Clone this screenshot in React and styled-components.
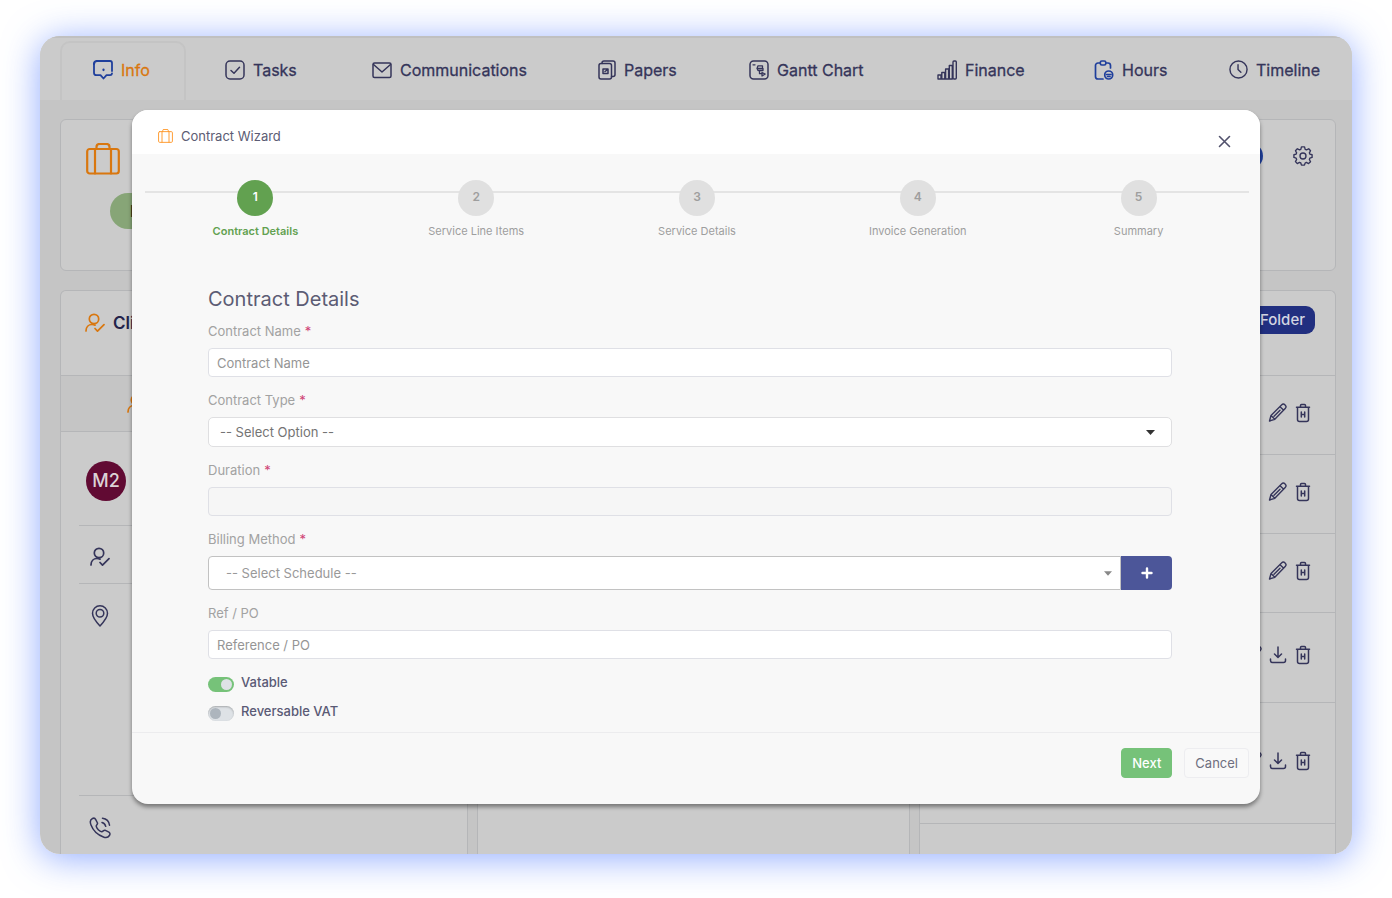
import React from "react";
import styled, { createGlobalStyle, css } from "styled-components";

const ink = "#35355a";
const orange = "#d9770f";
const blue = "#1f3f9c";
const line = "#b5b6b8";

const GlobalStyle = createGlobalStyle`
  *, *::before, *::after { box-sizing: border-box; }
  body { margin: 0; background: #fff; font-family: Inter, "Liberation Sans", sans-serif; font-size: 13px; line-height: 16px; color: ${ink}; }
  button, input, select { font: inherit; margin: 0; }
  h1, h2, h3, p { margin: 0; font-weight: 400; }
  svg { display: block; flex: none; }
`;

const Page = styled.div`
  padding: 36px 40px 44px;
`;

const Frame = styled.div`
  position: relative;
  overflow: hidden;
  border-radius: 20px;
  background: #c5c5c5;
`;

const Glow = styled.div`
  border-radius: 20px;
  box-shadow: 0 4px 36px rgba(70, 115, 255, 0.6);
`;

/* ---------- top navigation ---------- */

const Nav = styled.nav`
  display: grid;
  grid-template-columns: 129fr 147fr 226fr 151fr 188fr 157fr 135fr 143fr;
  align-items: end;
  height: 64px;
  padding: 0 16px 0 20px;
  background: #cbcbcb;
  border-top: 2px solid #c0c0c0;
`;

const Tab = styled.a`
  display: flex;
  align-items: center;
  gap: 8px;
  height: 59px;
  margin-right: 3px;
  padding: 0 0 2px 36px;
  font-size: 16px;
  line-height: 20px;
  white-space: nowrap;
  text-decoration: none;
  color: ${ink};
  -webkit-text-stroke: 0.3px currentColor;
  ${(p) =>
    p.$active &&
    css`
      padding: 0 0 4px 31px;
      color: ${orange};
      border: 2px solid #c4c4c4;
      border-bottom: 0;
      border-radius: 10px 10px 0 0;
    `}
`;

/* ---------- dimmed workspace ---------- */

const Workspace = styled.main`
  display: flex;
  flex-direction: column;
  gap: 19px;
  padding: 19px 16px 0 20px;
`;

const SummaryCard = styled.section`
  display: flex;
  justify-content: space-between;
  align-items: flex-start;
  height: 152px;
  padding: 23px 22px 0 25px;
  background: #cbcbcb;
  border: 1px solid ${line};
  border-radius: 6px;
`;

const SummaryMain = styled.div`
  display: flex;
  flex-direction: column;
  gap: 18px;
`;

const StatusPill = styled.span`
  margin-left: 24px;
  width: 110px;
  padding: 8px 20px;
  border-radius: 18px;
  background: #87a577;
  color: #17301a;
  font-size: 16px;
  line-height: 20px;
  font-weight: 600;
`;

const SummaryActions = styled.div`
  display: flex;
  align-items: center;
  gap: 30px;
`;

const RoundButton = styled.button`
  width: 26px;
  height: 26px;
  padding: 0;
  border: 0;
  border-radius: 13px;
  background: ${blue};
`;

const IconButton = styled.button`
  display: flex;
  padding: 0;
  border: 0;
  background: none;
  color: ${(p) => p.$color || ink};
`;

const IconSlot = styled.span`
  display: flex;
  justify-content: center;
  width: 28px;
`;

const Columns = styled.div`
  display: grid;
  grid-template-columns: 408fr 434fr 417fr;
  gap: 9px;
`;

const Panel = styled.section`
  background: #cbcbcb;
  border: 1px solid ${line};
  border-bottom: 0;
  border-radius: 6px 6px 0 0;
`;

const PanelHead = styled.header`
  display: flex;
  align-items: flex-start;
  gap: 8px;
  height: 85px;
  padding: 22px 24px 0;
  border-bottom: 1px solid ${line};
  ${(p) =>
    p.$end &&
    css`
      justify-content: flex-end;
      padding: 15px 20px 0;
    `}
`;

const PanelTitle = styled.h2`
  font-size: 17px;
  line-height: 20px;
  font-weight: 600;
  color: #23234a;
`;

const SubHead = styled.div`
  display: flex;
  align-items: center;
  height: 56px;
  padding-left: 66px;
  background: #c5c5c5;
  border-bottom: 1px solid ${line};
  color: ${orange};
`;

const ClientRows = styled.div`
  padding: 0 18px;
`;

const ClientRow = styled.div`
  display: flex;
  align-items: ${(p) => (p.$top ? "flex-start" : "center")};
  height: ${(p) => p.$height}px;
  padding: ${(p) => (p.$top ? "21px" : "4px")} 7px 0;
  border-bottom: 1px solid ${line};
  &:last-child { border-bottom: 0; }
`;

const Avatar = styled.span`
  width: 40px;
  height: 40px;
  border-radius: 50%;
  background: #610a33;
  color: #dcd2d6;
  font-size: 18px;
  line-height: 40px;
  font-weight: 500;
  text-align: center;
`;

const FolderButton = styled.button`
  height: 28px;
  padding: 0 10px 0 20px;
  border: 0;
  border-radius: 9px;
  background: #212f80;
  color: #d3d5e2;
  font-size: 15px;
  font-weight: 500;
`;

const FileRow = styled.div`
  display: flex;
  justify-content: flex-end;
  align-items: center;
  gap: 5px;
  height: ${(p) => p.$height}px;
  padding: 0 22px 5px 0;
  border-bottom: 1px solid ${line};
`;

/* ---------- wizard dialog ---------- */

const Dialog = styled.div`
  position: absolute;
  top: 74px;
  left: 92px;
  right: 92px;
  border-radius: 16px;
  background: #f8f8f8;
  box-shadow: 0 3px 4px rgba(0, 0, 0, 0.42);
`;

const DialogHead = styled.header`
  display: flex;
  align-items: center;
  gap: 8px;
  height: 44px;
  padding: 8px 29px 0 26px;
  border-radius: 16px 16px 0 0;
  background: #fff;
  color: #ff9a2e;
`;

const DialogTitle = styled.h1`
  flex: 1;
  font-size: 13px;
  color: #5c5c74;
`;

const CloseButton = styled(IconButton)`
  padding-top: 10px;
  color: #51516c;
`;

const Steps = styled.ol`
  position: relative;
  display: grid;
  grid-template-columns: repeat(5, 1fr);
  margin: 0 11px 0 13px;
  padding: 26px 0 0;
  list-style: none;
  &::before {
    content: "";
    position: absolute;
    top: 37px;
    left: 0;
    right: 0;
    height: 2px;
    background: #e4e4e4;
  }
`;

const Step = styled.li`
  position: relative;
  display: flex;
  flex-direction: column;
  align-items: center;
  gap: 7px;
  font-size: 11px;
  color: ${(p) => (p.$active ? "#62a150" : "#9e9e9e")};
  font-weight: ${(p) => (p.$active ? 600 : 400)};
`;

const StepDot = styled.span`
  width: 36px;
  height: 36px;
  border-radius: 50%;
  background: ${(p) => (p.$active ? "#62a150" : "#e0e0e0")};
  color: ${(p) => (p.$active ? "#fff" : "#9e9e9e")};
  font-size: 12px;
  line-height: 34px;
  font-weight: 600;
  text-align: center;
`;

const Form = styled.form`
  padding: 48px 88px 0 76px;
`;

const FormTitle = styled.h2`
  margin-bottom: 12px;
  font-size: 20px;
  line-height: 24px;
  color: #5c5c74;
`;

const Field = styled.div`
  display: flex;
  flex-direction: column;
  gap: 9px;
  margin-bottom: 15px;
`;

const Label = styled.label`
  color: #a2a2a2;
`;

const Required = styled.span`
  margin-left: 4px;
  color: #cf4274;
`;

const TextInput = styled.input`
  width: 100%;
  height: 29px;
  padding: 0 8px;
  border: 1px solid #dfe0e6;
  border-radius: 4px;
  background: #fff;
  color: #555;
  outline: none;
  &::placeholder { color: #959595; opacity: 1; }
  &:read-only { background: #f6f6f6; }
`;

const SelectBox = styled.div`
  position: relative;
  flex: 1;
  svg {
    position: absolute;
    top: 50%;
    right: ${(p) => (p.$joined ? 9 : 17)}px;
    margin-top: -2px;
    pointer-events: none;
    color: ${(p) => (p.$joined ? "#888" : "#333")};
  }
`;

const Select = styled.select`
  display: block;
  appearance: none;
  width: 100%;
  height: 30px;
  padding: 0 30px 0 11px;
  border: 1px solid #dfdfe1;
  border-radius: 5px;
  background: #fff;
  color: #747474;
  outline: none;
  ${(p) =>
    p.$joined &&
    css`
      height: 34px;
      padding-left: 17px;
      border-color: #c2c2c2;
      border-radius: 4px 0 0 4px;
      color: #999;
    `}
`;

const InputGroup = styled.div`
  display: flex;
`;

const AddButton = styled.button`
  display: flex;
  align-items: center;
  justify-content: center;
  width: 51px;
  height: 34px;
  padding: 0;
  border: 0;
  border-radius: 0 4px 4px 0;
  background: #4c5699;
  color: #fff;
`;

const SwitchRow = styled.label`
  display: flex;
  align-items: flex-start;
  gap: 7px;
  height: 29px;
  color: #5a5a75;
  font-weight: 500;
`;

const Switch = styled.input`
  appearance: none;
  width: 26px;
  height: 15px;
  margin-top: 3px;
  padding: 2px;
  border-radius: 8px;
  background: #dee2e6;
  box-shadow: inset 0 1px 2px rgba(0, 0, 0, 0.25);
  &::after {
    content: "";
    display: block;
    width: 11px;
    height: 11px;
    border-radius: 50%;
    background: #adb5bd;
  }
  &:checked { background: #76c279; box-shadow: none; }
  &:checked::after { margin-left: 11px; background: #dee2e6; }
`;

const DialogFoot = styled.footer`
  display: flex;
  justify-content: flex-end;
  gap: 12px;
  padding: 15px 11px 26px;
  border-top: 1px solid #ececee;
`;

const FootButton = styled.button`
  height: 30px;
  padding: 0 10px;
  border: 1px solid ${(p) => (p.$primary ? "#76c279" : "#ededf0")};
  border-radius: 4px;
  background: ${(p) => (p.$primary ? "#76c279" : "#f9f9f9")};
  color: ${(p) => (p.$primary ? "#fff" : "#6e6e7e")};
  font-weight: ${(p) => (p.$primary ? 500 : 400)};
`;

/* ---------- icons ---------- */

const Icon = ({ size = 20, height, box = "0 0 20 20", stroke = 1.5, color = "currentColor", children }) => (
  <svg width={size} height={height || size} viewBox={box} fill="none" stroke={color} strokeWidth={stroke} strokeLinecap="round" strokeLinejoin="round" aria-hidden="true">
    {children}
  </svg>
);

const InfoIcon = () => (
  <Icon color={blue} stroke={1.8}>
    <path d="M4 1h13a2 2 0 0 1 2 2v8M19 13.500a2 2 0 0 1-2 1.700h-3.500L10.500 18.500l-3-3.300H3.500a2.500 2.500 0 0 1-2.500-2.500V4" />
    <path d="M1 4a3 3 0 0 1 3-3M10.500 9.500v.6" strokeWidth="2.200" />
  </Icon>
);
const TasksIcon = () => (
  <Icon><rect x="1" y="1" width="18" height="18" rx="4" /><path d="m6 10.500 3 2.800 5.500-6" /></Icon>
);
const MailIcon = () => (
  <Icon><rect x="1" y="3" width="18" height="14.500" rx="1.500" /><path d="m1.500 4.500 8.500 7.500 8.500-7.500" /></Icon>
);
const PapersIcon = () => (
  <Icon size={18} height={20} box="0 0 18 20"><rect x="1" y="3.500" width="12.500" height="15.500" rx="2" /><path d="M4 3.500V3a2 2 0 0 1 2-2h9a2 2 0 0 1 2 2v11.500a2 2 0 0 1-2 2h-1.500" /><path d="M5 9h5v4.500H5zM7 11.500l2-1.500" /></Icon>
);
const GanttIcon = () => (
  <Icon><rect x="1" y="1" width="18" height="18" rx="3.500" /><path d="M4 4.800h2M9 5.800h4.500v2.700H8zM8 8.500l1 2h5v-2M10.500 10.500v3.200h2.500M13 12.500l3.200 1.500-3.200 2z" strokeWidth="1.300" /></Icon>
);
const FinanceIcon = () => (
  <Icon stroke={1.4}><path d="M1 15h3v4H1zM4.800 12.500h3V19h-3zM8.600 9h3v10h-3zM12.300 5.500h3V19h-3z" /><rect x="16" y="1" width="3.300" height="18" rx="1" /></Icon>
);
const HoursIcon = () => (
  <Icon color={blue} stroke={1.7}>
    <path d="M6 3H4a2.500 2.500 0 0 0-2.500 2.500v11A2.500 2.500 0 0 0 4 19h5M12 3h2a2.500 2.500 0 0 1 2.500 2.500V8" /><rect x="6.300" y="1" width="5.500" height="4" rx="1.500" />
    <circle cx="14.700" cy="15" r="4" /><path d="M12.500 14.500h4.500M13.500 16.500h2.500" />
  </Icon>
);
const ClockIcon = () => (
  <Icon size={19}><circle cx="10" cy="10" r="9" /><path d="M9.500 5v5l3 3" /></Icon>
);
const CaseIcon = ({ size, height, stroke }) => (
  <Icon size={size} height={height} box="0 0 34 32" stroke={stroke}>
    <rect x="1.200" y="6" width="31.600" height="24.500" rx="2.500" /><path d="M10.500 6V4a3 3 0 0 1 3-3h7a3 3 0 0 1 3 3v2M9 6v24.500M25 6v24.500" />
  </Icon>
);
const GearIcon = () => (
  <Icon size={20} box="0 0 22 22">
    <circle cx="11" cy="11" r="3.300" />
    <path d="M9.300 1h3.400l.7 2.700 1.500.6L17.300 3l2 2.200-1.300 2.300.6 1.500 2.400.6v3l-2.500.8-.5 1.400 1.300 2.500-2.200 2-2.400-1.200-1.400.7-.7 2.200H9.300l-.7-2.300-1.500-.6-2.400 1.200-2-2.100L4 14.800l-.6-1.500L1 12.600v-3L3.400 9 4 7.500 2.700 5.200 4.800 3l2.400 1.300 1.400-.6z" />
  </Icon>
);
const PersonIcon = () => (
  <Icon size={20} stroke={1.7}><circle cx="9" cy="6" r="4.700" /><path d="M1 18c0-4 2.500-6.500 6-6.500 1 0 2 .2 3 .6M10 15.500l2.500 2.700 6.500-6.500" /></Icon>
);
const PinIcon = () => (
  <Icon size={18} height={22} box="0 0 18 22"><path d="M9 21S1.500 13 1.500 8.300a7.500 7.500 0 0 1 15 0C16.500 13 9 21 9 21z" /><circle cx="9" cy="8.300" r="3.800" /></Icon>
);
const PhoneIcon = () => (
  <Icon size={22} box="0 0 22 22"><path d="M6.600 2.300 8.500 6c.5 1.200-1.500 2-1.300 3.200.4 2.300 3.300 5.200 5.500 5.500 1.200.2 2-1.900 3.200-1.500l4 2c1.300.8 1.300 2.100.5 3.300-1.300 2.200-3.500 2.500-6 1.500C8.500 17.800 4 13.200 2 8 .8 5 1.200 2.600 3.500 1.500c1.200-.6 2.500-.3 3.100.8zM13 5.500c2 .5 3.200 1.700 3.700 3.800M13.500 1.200c4 .5 6.500 3 7 7" /></Icon>
);
const PencilIcon = () => (
  <Icon stroke={1.4}><path d="m1.500 18 1.500-5.500L13.500 2a2.300 2.300 0 0 1 3.700 3.500L6.800 16.300zM12 3.800l3.500 3.300M3.200 12.700l3.400 3.400M6 13.200l6-6" /></Icon>
);
const TrashIcon = () => (
  <Icon><path d="M4.500 4.500v12A2 2 0 0 0 6.500 18.500h7a2 2 0 0 0 2-2v-12M3.500 4.300h13M7.500 4V2.500a1 1 0 0 1 1-1h3a1 1 0 0 1 1 1V4M8.300 9v5M11.700 9v5M8.300 11.500h3.400" /></Icon>
);
const DownloadIcon = () => (
  <Icon><path d="M10 2v10M6.500 9 10 12.500 13.500 9M2.500 14v1.500a2 2 0 0 0 2 2h11a2 2 0 0 0 2-2V14" /></Icon>
);
const CloseIcon = () => (
  <Icon size={13} box="0 0 13 13" stroke={1.6}><path d="m1.500 1.500 10 10M11.500 1.500l-10 10" /></Icon>
);
const CaretIcon = ({ width = 9 }) => (
  <svg width={width} height="5" viewBox="0 0 9 5" fill="currentColor" aria-hidden="true"><path d="M0 0h9L4.500 5z" /></svg>
);
const PlusIcon = () => (
  <Icon size={12} box="0 0 12 12" stroke={2.4}><path d="M6 1.500v9M1.500 6h9" /></Icon>
);

/* ---------- data ---------- */

const tabs = [
  ["Info", InfoIcon],
  ["Tasks", TasksIcon],
  ["Communications", MailIcon],
  ["Papers", PapersIcon],
  ["Gantt Chart", GanttIcon],
  ["Finance", FinanceIcon],
  ["Hours", HoursIcon],
  ["Timeline", ClockIcon],
];

const steps = ["Contract Details", "Service Line Items", "Service Details", "Invoice Generation", "Summary"];

const fileRows = [
  { height: 79 },
  { height: 79 },
  { height: 79 },
  { height: 90, download: true },
  { height: 121, download: true },
];

const FormField = ({ id, label, required, children }) => (
  <Field>
    <Label htmlFor={id}>
      {label}
      {required && <Required>*</Required>}
    </Label>
    {children}
  </Field>
);

const Wizard = () => (
  <Dialog role="dialog" aria-labelledby="wizard-title">
    <DialogHead>
      <CaseIcon size={15} height={14} stroke={2.2} />
      <DialogTitle id="wizard-title">Contract Wizard</DialogTitle>
      <CloseButton type="button" aria-label="Close"><CloseIcon /></CloseButton>
    </DialogHead>
    <Steps>
      {steps.map((name, i) => (
        <Step key={name} $active={i === 0}>
          <StepDot $active={i === 0}>{i + 1}</StepDot>
          {name}
        </Step>
      ))}
    </Steps>
    <Form id="contract" onSubmit={(e) => e.preventDefault()}>
      <FormTitle>Contract Details</FormTitle>
      <FormField id="name" label="Contract Name" required>
        <TextInput id="name" placeholder="Contract Name" />
      </FormField>
      <FormField id="type" label="Contract Type" required>
        <SelectBox>
          <Select id="type"><option>-- Select Option --</option></Select>
          <CaretIcon />
        </SelectBox>
      </FormField>
      <FormField id="duration" label="Duration" required>
        <TextInput id="duration" readOnly />
      </FormField>
      <FormField id="billing" label="Billing Method" required>
        <InputGroup>
          <SelectBox $joined>
            <Select id="billing" $joined><option>-- Select Schedule --</option></Select>
            <CaretIcon width={8} />
          </SelectBox>
          <AddButton type="button" aria-label="Add schedule"><PlusIcon /></AddButton>
        </InputGroup>
      </FormField>
      <FormField id="ref" label="Ref / PO">
        <TextInput id="ref" placeholder="Reference / PO" />
      </FormField>
      <SwitchRow><Switch type="checkbox" defaultChecked />Vatable</SwitchRow>
      <SwitchRow><Switch type="checkbox" />Reversable VAT</SwitchRow>
    </Form>
    <DialogFoot>
      <FootButton type="submit" form="contract" $primary>Next</FootButton>
      <FootButton type="button">Cancel</FootButton>
    </DialogFoot>
  </Dialog>
);

export default function App() {
  return (
    <Page>
      <GlobalStyle />
      <Glow>
        <Frame>
          <Nav>
            {tabs.map(([name, TabIcon], i) => (
              <Tab key={name} href="#" $active={i === 0}><TabIcon />{name}</Tab>
            ))}
          </Nav>
          <Workspace>
            <SummaryCard>
              <SummaryMain>
                <IconButton as="span" $color={orange}><CaseIcon size={34} height={32} stroke={2.2} /></IconButton>
                <StatusPill>P</StatusPill>
              </SummaryMain>
              <SummaryActions>
                <RoundButton aria-label="Actions" />
                <IconButton aria-label="Settings"><GearIcon /></IconButton>
              </SummaryActions>
            </SummaryCard>
            <Columns>
              <Panel>
                <PanelHead>
                  <IconButton as="span" $color={orange}><PersonIcon /></IconButton>
                  <PanelTitle>Client</PanelTitle>
                </PanelHead>
                <SubHead><PersonIcon /></SubHead>
                <ClientRows>
                  <ClientRow $height={94}><Avatar>M2</Avatar></ClientRow>
                  <ClientRow $height={58}><IconSlot><PersonIcon /></IconSlot></ClientRow>
                  <ClientRow $height={212} $top><IconSlot><PinIcon /></IconSlot></ClientRow>
                  <ClientRow $height={58} $top><IconSlot><PhoneIcon /></IconSlot></ClientRow>
                </ClientRows>
              </Panel>
              <Panel />
              <Panel>
                <PanelHead $end><FolderButton>Folder</FolderButton></PanelHead>
                {fileRows.map((row, i) => (
                  <FileRow key={i} $height={row.height}>
                    <IconButton aria-label="Edit"><PencilIcon /></IconButton>
                    {row.download && <IconButton aria-label="Download"><DownloadIcon /></IconButton>}
                    <IconButton aria-label="Delete"><TrashIcon /></IconButton>
                  </FileRow>
                ))}
              </Panel>
            </Columns>
          </Workspace>
          <Wizard />
        </Frame>
      </Glow>
    </Page>
  );
}
